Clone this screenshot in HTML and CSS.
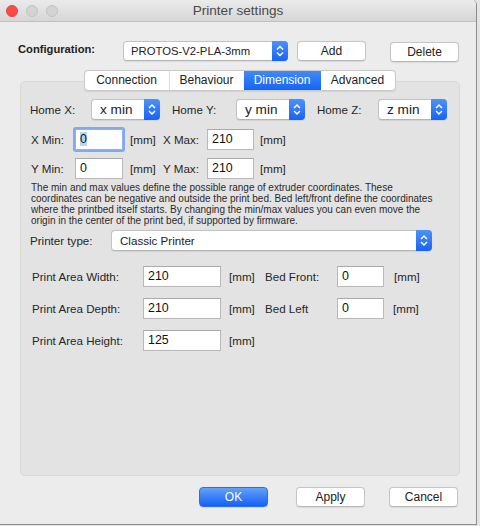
FILE: index.html
```html
<!DOCTYPE html>
<html>
<head>
<meta charset="utf-8">
<link rel="stylesheet" href="styles.css">
</head>
<body>
<div class="window">
  <div class="titlebar">
    <div class="lights"><span class="light red"></span><span class="light"></span><span class="light"></span></div>
    <div class="title">Printer settings</div>
    <div></div>
  </div>
  <div class="content">
    <div class="config-row">
      <span class="config-label">Configuration:</span>
      <div class="combo combo-config"><span class="combo-text">PROTOS-V2-PLA-3mm</span><span class="combo-arrow"><svg width="16" height="20" viewBox="0 0 16 20"><path d="M5 8.5 L8 5.5 L11 8.5 M5 11.5 L8 14.5 L11 11.5" fill="none" stroke="#fff" stroke-width="1.5"/></svg></span></div>
      <div class="btn btn-add">Add</div>
      <div class="btn btn-delete">Delete</div>
    </div>

    <div class="tabs">
      <div class="tab-group">
        <div class="tab tab-conn">Connection</div>
        <div class="tab tab-beh">Behaviour</div>
        <div class="tab tab-dim active">Dimension</div>
        <div class="tab tab-adv">Advanced</div>
      </div>
    </div>

    <div class="panel">
      <div class="home-row">
        <span class="lbl home-x">Home X:</span>
        <div class="combo combo-home"><span class="combo-text big">x min</span><span class="combo-arrow"><svg width="16" height="21" viewBox="0 0 16 21"><path d="M5 9 L8 6 L11 9 M5 12 L8 15 L11 12" fill="none" stroke="#fff" stroke-width="1.5"/></svg></span></div>
        <span class="lbl home-y">Home Y:</span>
        <div class="combo combo-home"><span class="combo-text big">y min</span><span class="combo-arrow"><svg width="16" height="21" viewBox="0 0 16 21"><path d="M5 9 L8 6 L11 9 M5 12 L8 15 L11 12" fill="none" stroke="#fff" stroke-width="1.5"/></svg></span></div>
        <span class="lbl home-z">Home Z:</span>
        <div class="combo combo-home"><span class="combo-text big">z min</span><span class="combo-arrow"><svg width="16" height="21" viewBox="0 0 16 21"><path d="M5 9 L8 6 L11 9 M5 12 L8 15 L11 12" fill="none" stroke="#fff" stroke-width="1.5"/></svg></span></div>
      </div>

      <div class="minmax-row row-x">
        <span class="lbl mm-lbl">X Min:</span>
        <span class="field f-min focus"><span class="sel">0</span></span>
        <span class="lbl unit u1">[mm]</span>
        <span class="lbl mm-lbl">X Max:</span>
        <span class="field f-max">210</span>
        <span class="lbl unit u2">[mm]</span>
      </div>
      <div class="minmax-row row-y">
        <span class="lbl mm-lbl">Y Min:</span>
        <span class="field f-min">0</span>
        <span class="lbl unit u1">[mm]</span>
        <span class="lbl mm-lbl">Y Max:</span>
        <span class="field f-max">210</span>
        <span class="lbl unit u2">[mm]</span>
      </div>

      <p class="desc">The min and max values define the possible range of extruder coordinates. These<br>coordinates can be negative and outside the print bed. Bed left/front define the coordinates<br>where the printbed itself starts. By changing the min/max values you can even move the<br>origin in the center of the print bed, if supported by firmware.</p>

      <div class="type-row">
        <span class="lbl type-lbl">Printer type:</span>
        <div class="combo combo-type"><span class="combo-text">Classic Printer</span><span class="combo-arrow"><svg width="16" height="21" viewBox="0 0 16 21"><path d="M5 9 L8 6 L11 9 M5 12 L8 15 L11 12" fill="none" stroke="#fff" stroke-width="1.5"/></svg></span></div>
      </div>

      <div class="area-row first">
        <span class="lbl area-lbl">Print Area Width:</span>
        <span class="field f-area">210</span>
        <span class="lbl unit ua">[mm]</span>
        <span class="lbl bed-lbl">Bed Front:</span>
        <span class="field f-bed">0</span>
        <span class="lbl unit ub">[mm]</span>
      </div>
      <div class="area-row">
        <span class="lbl area-lbl">Print Area Depth:</span>
        <span class="field f-area">210</span>
        <span class="lbl unit ua">[mm]</span>
        <span class="lbl bed-lbl">Bed Left</span>
        <span class="field f-bed">0</span>
        <span class="lbl unit ub2">[mm]</span>
      </div>
      <div class="area-row">
        <span class="lbl area-lbl">Print Area Height:</span>
        <span class="field f-area">125</span>
        <span class="lbl unit ua">[mm]</span>
      </div>
    </div>

    <div class="actions">
      <div class="btn btn-ok">OK</div>
      <div class="btn btn-apply">Apply</div>
      <div class="btn btn-cancel">Cancel</div>
    </div>
  </div>
</div>
</body>
</html>
```

FILE: styles.css
```css
html, body {
  margin: 0;
  padding: 0;
}
body {
  background: #e4e4e4;
  font-family: "Liberation Sans", Arial, sans-serif;
  color: #262626;
}
.window {
  width: 477px;
  height: 525px;
  box-sizing: border-box;
  background: #ececec;
  border-right: 1px solid #8c8c8c;
  border-bottom: 1px solid #8c8c8c;
  border-top-right-radius: 5px;
  overflow: hidden;
}
.titlebar {
  display: grid;
  grid-template-columns: 1fr auto 1fr;
  height: 21px;
  border-bottom: 1px solid #c0c0c0;
  background: linear-gradient(#ebebeb, #d6d6d6);
}
.lights {
  display: flex;
  align-items: center;
  gap: 8px;
  padding-left: 6px;
}
.light {
  width: 12px;
  height: 12px;
  box-sizing: border-box;
  border-radius: 50%;
  background: #d3d3d3;
  border: 1px solid #c2c2c2;
}
.light.red {
  background: #fc4c45;
  border-color: #e2463f;
}
.title {
  font-size: 13.6px;
  line-height: 22px;
  color: #4b4b4b;
}
.content {
  padding-top: 19px;
}
.config-row {
  display: flex;
  align-items: flex-start;
  padding-left: 18px;
  height: 21px;
}
.config-label {
  width: 105px;
  font-weight: bold;
  font-size: 11.2px;
  line-height: 16px;
  color: #222;
}
.combo {
  display: flex;
  box-sizing: border-box;
  height: 21px;
  border: 1px solid #c4c4c4;
  border-bottom-color: #b4b4b4;
  border-radius: 4px;
  background: #fff;
  box-shadow: 0 0.5px 1px rgba(0, 0, 0, 0.08);
}
.combo-text {
  flex: 1;
  padding-left: 8px;
  font-size: 11.6px;
  line-height: 19px;
  color: #222;
  white-space: nowrap;
}
.combo-text.big {
  font-size: 13.6px;
  padding-left: 8px;
}
.combo-arrow {
  display: flex;
  width: 16px;
  margin: -1px -1px -1px 0;
  border-radius: 0 4px 4px 0;
  background: linear-gradient(#4c92f9, #1862f5);
}
.combo-config {
  width: 165px;
  height: 20px;
}
.combo-config .combo-text {
  font-size: 11.3px;
  line-height: 18px;
  padding-left: 7px;
}
.btn {
  box-sizing: border-box;
  height: 20px;
  width: 69px;
  border: 1px solid #c6c6c6;
  border-bottom-color: #b8b8b8;
  border-radius: 4px;
  background: #fff;
  font-size: 12px;
  line-height: 18px;
  text-align: center;
  color: #222;
  box-shadow: 0 0.5px 1px rgba(0, 0, 0, 0.08);
}
.btn-add {
  margin-left: 9px;
}
.btn-delete {
  margin-left: 24px;
  margin-top: 1px;
}
.tabs {
  position: relative;
  z-index: 1;
  display: flex;
  justify-content: center;
  margin: 8px 0 0 20px;
  width: 439px;
}
.tab-group {
  display: flex;
  border: 1px solid #c9c9c9;
  border-radius: 4px;
  background: #fff;
  overflow: hidden;
  box-shadow: 0 0.5px 1px rgba(0, 0, 0, 0.08);
}
.tab {
  font-size: 12px;
  line-height: 19px;
  text-align: center;
  color: #222;
  border-left: 1px solid #dedede;
}
.tab:first-child {
  border-left: none;
}
.tab-conn { width: 84px; }
.tab-beh { width: 74px; }
.tab-dim { width: 77px; }
.tab-adv { width: 74px; border-left: none; }
.tab.active {
  color: #fff;
  border-left: none;
  background: linear-gradient(#3f8af8, #1664f5);
}
.panel {
  position: relative;
  margin: -10px 0 0 20px;
  width: 440px;
  height: 395px;
  box-sizing: border-box;
  border: 1px solid #d8d8d8;
  border-radius: 5px;
  background: #e3e3e3;
  padding-top: 17px;
}
.lbl {
  font-size: 11.6px;
  color: #262626;
  white-space: nowrap;
}
.home-row {
  display: flex;
  align-items: center;
  height: 21px;
  padding-left: 9px;
}
.home-x { width: 61px; }
.home-y { width: 64px; margin-left: 12px; }
.home-z { width: 61px; margin-left: 12px; }
.combo-home { width: 69px; }
.minmax-row {
  display: flex;
  align-items: center;
  height: 21px;
  padding-left: 10px;
}
.row-x { margin-top: 9px; }
.row-y { margin-top: 8px; }
.mm-lbl { width: 44px; }
.field {
  box-sizing: border-box;
  height: 21px;
  border: 1px solid #b9b9b9;
  border-top-color: #a9a9a9;
  background: #fff;
  font-size: 12.4px;
  line-height: 19px;
  padding-left: 4px;
  color: #111;
}
.field.focus {
  border-color: #8fb2f2;
  box-shadow: 0 0 0 2px #82a9f0;
  border-radius: 1px;
}
.sel {
  background: #b5d3fb;
}
.f-min { width: 48px; }
.f-max { width: 47px; }
.unit.u1 { width: 33px; margin-left: 7px; }
.unit.u2 { margin-left: 6px; }
.desc {
  margin: 3px 0 0 10px;
  font-size: 10px;
  line-height: 11px;
  color: #2a2a2a;
  white-space: nowrap;
}
.type-row {
  display: flex;
  align-items: center;
  margin-top: 4px;
  padding-left: 9px;
  height: 21px;
}
.type-lbl { width: 81px; }
.combo-type { width: 321px; }
.combo-type .combo-text { padding-left: 8px; }
.area-row {
  display: flex;
  align-items: center;
  height: 21px;
  padding-left: 11px;
  margin-top: 11px;
}
.area-row.first { margin-top: 15px; }
.area-lbl { width: 111px; }
.f-area { width: 78px; }
.unit.ua { width: 36px; margin-left: 8px; }
.bed-lbl { width: 72px; }
.f-bed { width: 47px; }
.unit.ub { margin-left: 10px; }
.unit.ub2 { margin-left: 9px; }
.actions {
  display: flex;
  margin-top: 11px;
  padding-left: 199px;
}
.btn-ok {
  color: #fff;
  border-color: #2a6cf2;
  background: linear-gradient(#62a1fa, #1561f5);
}
.btn-apply { margin-left: 28px; }
.btn-cancel { margin-left: 24px; }
```
